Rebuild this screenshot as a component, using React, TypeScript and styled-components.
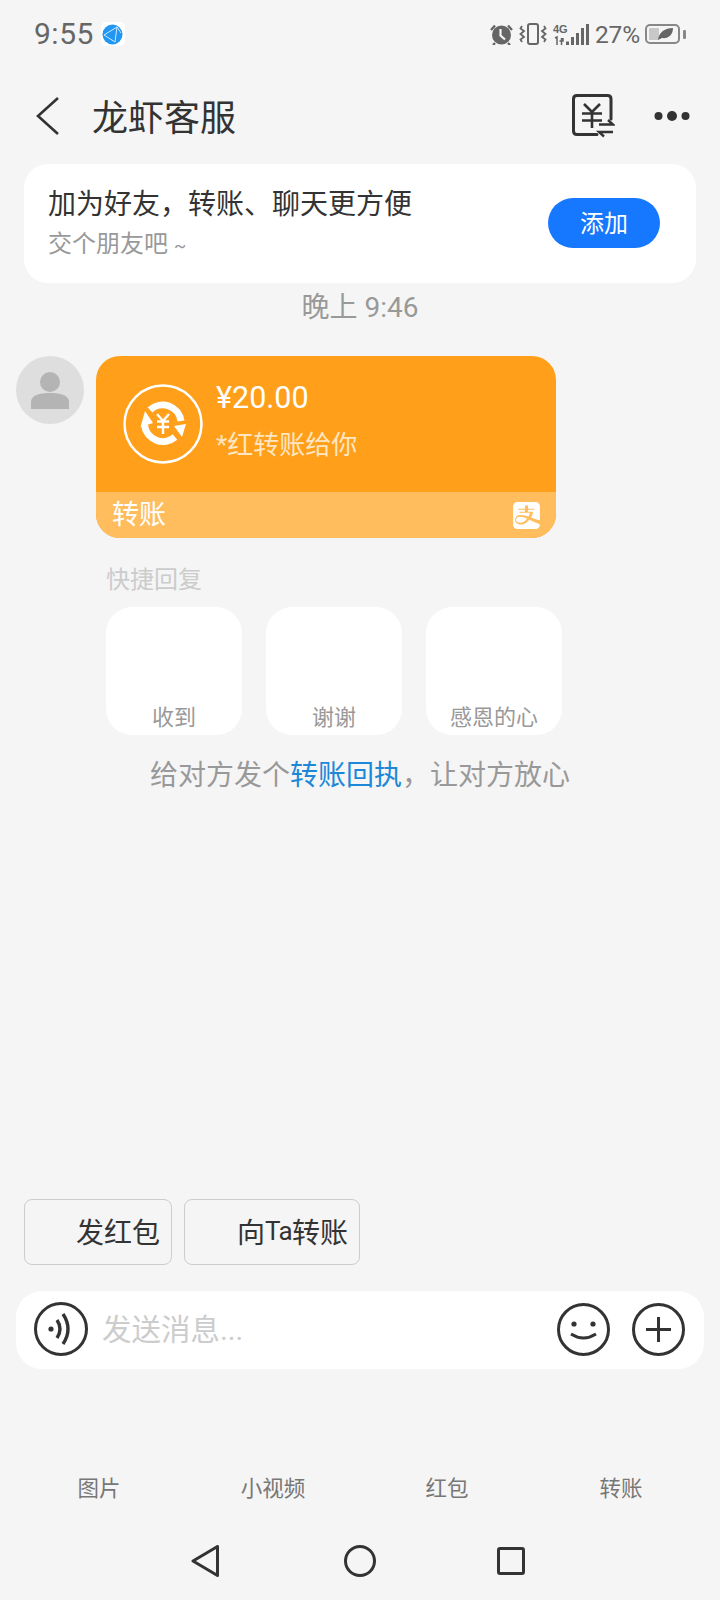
import React from "react";
import styled, { createGlobalStyle } from "styled-components";
import { SiAlipay } from "react-icons/si";

const Global = createGlobalStyle`
  html, body { margin: 0; padding: 0; background: #f5f5f5; }
  body { font-family: Roboto, "Noto Sans CJK SC", sans-serif; }
`;

const Page = styled.div`
  width: 720px;
  height: 1600px;
  display: flex;
  flex-direction: column;
  background: #f5f5f5;
  overflow: hidden;
`;

const StatusBar = styled.div`
  height: 68px;
  box-sizing: border-box;
  padding: 0 34px 0 34px;
  display: flex;
  align-items: center;
  color: #666;
`;

const Clock = styled.span`
  font-size: 30px;
  line-height: 68px;
  letter-spacing: 0.5px;
`;

const StatusRight = styled.div`
  margin-left: auto;
  display: flex;
  align-items: center;
  gap: 6px;
`;

const Percent = styled.span`
  width: 44px;
  font-size: 24.5px;
  letter-spacing: -0.2px;
  white-space: nowrap;
`;

const Header = styled.div`
  height: 96px;
  display: flex;
  align-items: center;
  padding-left: 36px;
`;

const Title = styled.h1`
  margin: 0 0 2px 32px;
  font-size: 36px;
  font-weight: 400;
  color: #333;
`;

const HeaderActions = styled.div`
  margin-left: auto;
  padding-right: 30px;
  display: flex;
  align-items: center;
  gap: 39px;
`;

const FriendCard = styled.div`
  margin: 0 24px;
  height: 119px;
  box-sizing: border-box;
  padding: 0 36px 0 24px;
  border-radius: 24px;
  background: #fff;
  display: flex;
  align-items: center;
  justify-content: space-between;
`;

const FriendText = styled.div`
  padding-top: 2px;
  display: flex;
  flex-direction: column;
  gap: 4px;
`;

const FriendTitle = styled.div`
  font-size: 28px;
  line-height: 36px;
  color: #333;
`;

const FriendSub = styled.div`
  font-size: 24px;
  line-height: 34px;
  color: #999;
`;

const Tilde = styled.span`
  font-size: 18px;
`;

const AddButton = styled.button`
  width: 112px;
  height: 50px;
  margin-bottom: 2px;
  border: 0;
  padding: 0 0 2px;
  border-radius: 25px;
  background: #1677ff;
  color: #fff;
  font: inherit;
  font-size: 24px;
`;

const TimeLabel = styled.div`
  height: 47px;
  line-height: 50px;
  text-align: center;
  font-size: 28px;
  color: #999;
`;

const MessageRow = styled.div`
  margin-top: 26px;
  padding-left: 16px;
  display: flex;
  gap: 12px;
`;

const Avatar = styled.div`
  width: 68px;
  height: 68px;
  border-radius: 50%;
  background: #dedede;
  display: flex;
  align-items: center;
  justify-content: center;
`;

const TransferCard = styled.div`
  width: 460px;
  height: 182px;
  border-radius: 24px;
  overflow: hidden;
  display: flex;
  flex-direction: column;
  background: #ff9f1a;
`;

const TransferBody = styled.div`
  height: 136px;
  display: flex;
  padding: 28px 0 0 27px;
  box-sizing: border-box;
  gap: 13px;
`;

const TransferInfo = styled.div`
  padding-top: 1px;
  display: flex;
  flex-direction: column;
`;

const Amount = styled.div`
  font-size: 30.5px;
  line-height: 26px;
  color: #fff;
`;

const Memo = styled.div`
  margin-top: 14px;
  font-size: 26px;
  line-height: 40px;
  color: #ffe6c2;
`;

const TransferFooter = styled.div`
  flex: 1;
  background: #ffbd5e;
  display: flex;
  align-items: center;
  justify-content: space-between;
  padding: 0 16px;
  color: #fff;
  font-size: 27px;
`;

const FooterLabel = styled.span`
  padding-bottom: 5px;
`;

const AlipayMark = styled.span`
  display: flex;
  color: #fff;
`;

const QuickSection = styled.div`
  margin-top: 26px;
  padding-left: 106px;
`;

const QuickTitle = styled.div`
  height: 30px;
  line-height: 32px;
  font-size: 24px;
  color: #ccc;
`;

const QuickRow = styled.div`
  margin-top: 13px;
  display: flex;
  gap: 24px;
`;

const QuickTile = styled.div`
  width: 136px;
  height: 128px;
  box-sizing: border-box;
  padding-bottom: 2px;
  border-radius: 26px;
  background: #fff;
  display: flex;
  align-items: flex-end;
  justify-content: center;
  font-size: 22px;
  line-height: 30px;
  color: #999;
`;

const ReceiptHint = styled.div`
  margin-top: 21px;
  height: 36px;
  line-height: 40px;
  text-align: center;
  font-size: 28px;
  color: #999;
`;

const ReceiptLink = styled.span`
  color: #1e88d8;
`;

const BottomArea = styled.div`
  margin-top: auto;
  padding-bottom: 23px;
  display: flex;
  flex-direction: column;
`;

const ChipRow = styled.div`
  padding-left: 24px;
  display: flex;
  gap: 12px;
`;

const Chip = styled.div<{ $width: number }>`
  width: ${(p) => p.$width}px;
  height: 66px;
  box-sizing: border-box;
  padding: 0 11px 2px 0;
  border: 1px solid #ccc;
  border-radius: 8px;
  display: flex;
  align-items: center;
  justify-content: flex-end;
  font-size: 28px;
  color: #333;
`;

const ChipLatin = styled.span`
  font-size: 26px;
  letter-spacing: -0.6px;
`;

const InputBar = styled.div`
  margin: 26px 16px 0;
  height: 78px;
  box-sizing: border-box;
  padding: 0 19px 2px 18px;
  border-radius: 26px;
  background: #fff;
  display: flex;
  align-items: center;
`;

const Placeholder = styled.div`
  margin-left: 14px;
  padding-bottom: 4px;
  flex: 1;
  font-size: 29.5px;
  color: #ccc;
`;

const InputActions = styled.div`
  display: flex;
  align-items: center;
  gap: 22px;
`;

const Tabs = styled.div`
  margin-top: 97px;
  height: 40px;
  padding-left: 12px;
  display: grid;
  grid-template-columns: repeat(4, 174px);
  align-items: center;
  justify-items: center;
  font-size: 21.5px;
  color: #777;
`;

const NavBar = styled.div`
  margin-top: 39px;
  padding-left: 189px;
  display: grid;
  grid-template-columns: 155px 151px 32px;
  height: 32px;
`;

const Icon = styled.svg`
  display: block;
  flex: none;
`;

const AppBadge = styled.span`
  margin-left: 7px;
  width: 24px;
  height: 24px;
  border-radius: 5px;
  background: #fff;
  display: flex;
  align-items: center;
  justify-content: center;
`;

const TinyLabel = styled.text`
  font-family: "Liberation Sans Narrow", "Liberation Sans", sans-serif;
  font-size: 11px;
  font-weight: 700;
  fill: #666;
`;

export default function App() {
  return (
    <Page>
      <Global />
      <StatusBar>
        <Clock>9:55</Clock>
        <AppBadge>
          <Icon width="21" height="21" viewBox="0 0 21 21">
            <circle cx="10.5" cy="10.5" r="10" fill="#2196f3" />
            <path d="M2 11 L15 3 L13 18 Z M15 3 L19 9" fill="none" stroke="#cdeafd" strokeWidth="1" />
          </Icon>
        </AppBadge>
        <StatusRight>
          <Icon width="23" height="22" viewBox="0 0 23 22">
            <circle cx="11.5" cy="12" r="9.5" fill="#666" />
            <path d="M10.5 6 V12.5 L15 16.5" stroke="#f5f5f5" strokeWidth="2.2" fill="none" />
            <path d="M1 7 L5 2.5 M22 7 L18 2.5 M5 20 L3 22 M18 20 L20 22" stroke="#666" strokeWidth="2.4" />
          </Icon>
          <Icon width="28" height="22" viewBox="0 0 28 22">
            <rect x="9" y="1" width="10" height="20" rx="2" fill="none" stroke="#666" strokeWidth="2" />
            <path d="M3 3 L1.5 5.5 L5 8 L1.5 11 L5 14 L1.5 16.5 L3 19 M25 3 L26.5 5.5 L23 8 L26.5 11 L23 14 L26.5 16.5 L25 19" fill="none" stroke="#666" strokeWidth="1.8" />
          </Icon>
          <Icon width="36" height="22" viewBox="0 0 36 22">
            <TinyLabel x="0" y="10">4G</TinyLabel>
            <path d="M2 15 L4 14 V22 M6.5 18 H10 V15 M8.5 15 V22" fill="none" stroke="#666" strokeWidth="1.5" />
            <rect x="13" y="18.5" width="3" height="3.5" fill="#666" />
            <rect x="18" y="14" width="3" height="8" fill="#666" />
            <rect x="23" y="10" width="3" height="12" fill="#666" />
            <rect x="28" y="5" width="3" height="17" fill="#666" />
            <rect x="33" y="1" width="3" height="21" fill="#666" />
          </Icon>
          <Percent>27%</Percent>
          <Icon width="41" height="20" viewBox="0 0 41 20">
            <rect x="1" y="1" width="33" height="18" rx="4" fill="none" stroke="#888" strokeWidth="2" />
            <rect x="4" y="4" width="10" height="12" rx="1" fill="#c8c8c8" />
            <path d="M13 16 C14 8 20 4 28 4 C28 11 23 15 17 14 Z" fill="#666" />
            <rect x="38" y="6" width="3" height="9" rx="1" fill="#888" />
          </Icon>
        </StatusRight>
      </StatusBar>

      <Header>
        <Icon width="24" height="38" viewBox="0 0 24 38">
          <path d="M22 1 L2 19 L22 37" fill="none" stroke="#333" strokeWidth="2.6" />
        </Icon>
        <Title>龙虾客服</Title>
        <HeaderActions>
          <Icon width="44" height="46" viewBox="0 0 44 46">
            <path d="M40 26 V6 Q40 2.5 36.5 2.5 H6 Q2.5 2.5 2.5 6 V38 Q2.5 41.5 6 41.5 H26" fill="none" stroke="#333" strokeWidth="3" strokeLinecap="round" />
            <path d="M13 11 L21 19 L29 11 M11 20.5 H31 M11 27.5 H31 M21 19 V35" fill="none" stroke="#333" strokeWidth="2.6" />
            <path d="M28 31.5 H42 L37 27 M42 39 H28 L33 43.5" fill="none" stroke="#333" strokeWidth="2.4" />
          </Icon>
          <Icon width="36" height="12" viewBox="0 0 36 12">
            <circle cx="4.5" cy="6" r="4" fill="#333" />
            <circle cx="18" cy="6" r="5" fill="#333" />
            <circle cx="31.5" cy="6" r="4" fill="#333" />
          </Icon>
        </HeaderActions>
      </Header>

      <FriendCard>
        <FriendText>
          <FriendTitle>加为好友，转账、聊天更方便</FriendTitle>
          <FriendSub>交个朋友吧 <Tilde>~</Tilde></FriendSub>
        </FriendText>
        <AddButton>添加</AddButton>
      </FriendCard>

      <TimeLabel>晚上 9:46</TimeLabel>

      <MessageRow>
        <Avatar>
          <Icon width="38" height="38" viewBox="0 0 38 38">
            <circle cx="19" cy="11" r="10" fill="#b4b4b4" />
            <path d="M0 38 V31 C0 24 9 22 19 22 C29 22 38 24 38 31 V38 Z" fill="#b4b4b4" />
          </Icon>
        </Avatar>
        <TransferCard>
          <TransferBody>
            <Icon width="80" height="80" viewBox="0 0 80 80">
              <circle cx="40" cy="40" r="38.5" fill="none" stroke="#fff" strokeWidth="2.5" />
              <path d="M27 26 A18.5 18.5 0 0 1 58 37" fill="none" stroke="#fff" strokeWidth="7" />
              <path d="M21.5 41 A18.5 18.5 0 0 0 52 53" fill="none" stroke="#fff" strokeWidth="7" />
              <path d="M22 27 L17.5 43 L30 39 Z" fill="#fff" />
              <path d="M59 53 L51 42 L63 40 Z" fill="#fff" />
              <path d="M34 30 L40 37 L46 30 M34 37.5 H46 M34 43 H46 M40 37 V50" fill="none" stroke="#fff" strokeWidth="2.4" />
            </Icon>
            <TransferInfo>
              <Amount>¥20.00</Amount>
              <Memo>*红转账给你</Memo>
            </TransferInfo>
          </TransferBody>
          <TransferFooter>
            <FooterLabel>转账</FooterLabel>
            <AlipayMark><SiAlipay size={27} /></AlipayMark>
          </TransferFooter>
        </TransferCard>
      </MessageRow>

      <QuickSection>
        <QuickTitle>快捷回复</QuickTitle>
        <QuickRow>
          <QuickTile>收到</QuickTile>
          <QuickTile>谢谢</QuickTile>
          <QuickTile>感恩的心</QuickTile>
        </QuickRow>
      </QuickSection>

      <ReceiptHint>
        给对方发个<ReceiptLink>转账回执</ReceiptLink>，让对方放心
      </ReceiptHint>

      <BottomArea>
        <ChipRow>
          <Chip $width={148}>发红包</Chip>
          <Chip $width={176}>向<ChipLatin>Ta</ChipLatin>转账</Chip>
        </ChipRow>
        <InputBar>
          <Icon width="54" height="54" viewBox="0 0 54 54">
            <circle cx="27" cy="27" r="25.5" fill="none" stroke="#333" strokeWidth="3" />
            <circle cx="17" cy="27" r="2.6" fill="#333" />
            <path d="M23 18 Q29 27 23 36" fill="none" stroke="#333" strokeWidth="3.4" />
            <path d="M29 12 Q39 27 29 42" fill="none" stroke="#333" strokeWidth="3.4" />
          </Icon>
          <Placeholder>发送消息...</Placeholder>
          <InputActions>
            <Icon width="53" height="53" viewBox="0 0 53 53">
              <circle cx="26.5" cy="26.5" r="25" fill="none" stroke="#333" strokeWidth="3" />
              <circle cx="17" cy="21" r="2.6" fill="#333" />
              <circle cx="36" cy="21" r="2.6" fill="#333" />
              <path d="M14 31 Q26.5 39 39 31" fill="none" stroke="#333" strokeWidth="3" />
            </Icon>
            <Icon width="53" height="53" viewBox="0 0 53 53">
              <circle cx="26.5" cy="26.5" r="25" fill="none" stroke="#333" strokeWidth="3" />
              <path d="M26.5 14 V39 M14 26.5 H39" fill="none" stroke="#333" strokeWidth="3" />
            </Icon>
          </InputActions>
        </InputBar>
        <Tabs>
          <span>图片</span>
          <span>小视频</span>
          <span>红包</span>
          <span>转账</span>
        </Tabs>
        <NavBar>
          <Icon width="32" height="32" viewBox="0 0 32 32">
            <path d="M28.5 1.5 V30.5 L4 16 Z" fill="none" stroke="#333" strokeWidth="3" strokeLinejoin="round" />
          </Icon>
          <Icon width="32" height="32" viewBox="0 0 32 32">
            <circle cx="16" cy="16" r="14.5" fill="none" stroke="#333" strokeWidth="3" />
          </Icon>
          <Icon width="32" height="32" viewBox="0 0 32 32">
            <rect x="3.5" y="3.5" width="25" height="25" rx="1.5" fill="none" stroke="#333" strokeWidth="3" />
          </Icon>
        </NavBar>
      </BottomArea>
    </Page>
  );
}
